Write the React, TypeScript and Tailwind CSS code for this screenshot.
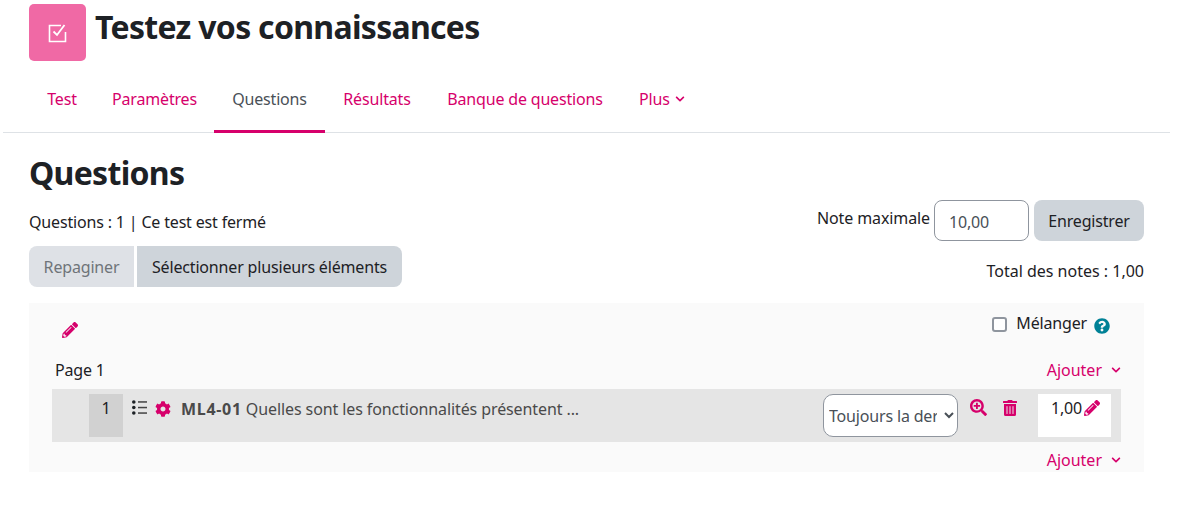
import React from 'react';
import { FaCog, FaPencilAlt, FaQuestionCircle, FaSearchPlus, FaTrashAlt, FaChevronDown } from 'react-icons/fa';

const tabs = [
  { label: 'Test', width: 'w-[66px]' },
  { label: 'Paramètres', width: 'w-[119px]' },
  { label: 'Questions', width: 'w-[111px]' },
  { label: 'Résultats', width: 'w-[104px]' },
  { label: 'Banque de questions', width: 'w-[192px]' },
];

const AddMenu: React.FC = () => (
  <a className="flex items-center gap-[9px] text-[#d6006b] tracking-normal">
    Ajouter
    <FaChevronDown className="w-[10px] h-[10px]" />
  </a>
);

const App: React.FC = () => {
  return (
    <div className="w-[1188px] h-[524px] bg-white overflow-hidden font-['Noto_Sans','Open_Sans',sans-serif] text-[16px] leading-[22px] text-[#1d2125] tracking-[-0.17px]">
      <header className="pl-[29px] pt-[4px] flex items-start">
        <div className="w-[57px] h-[57px] rounded-[5px] bg-[#f069a5] flex items-center justify-center">
          <svg width="22" height="22" viewBox="0 0 22 22" fill="none" stroke="white">
            <path d="M14 3.5H2.5V19.5H18.5V10" strokeWidth="1.6" />
            <path d="M6.5 9.5L10 13L17.5 3" strokeWidth="1.8" />
          </svg>
        </div>
        <h1 className="ml-[9px] -mt-[1px] text-[32px] leading-[48px] font-bold tracking-[-0.7px]">Testez vos connaissances</h1>
      </header>

      <nav className="mt-[15px] ml-[3px] w-[1167px] h-[57px] border-b border-[#dee2e6] flex pl-[26px]">
        {tabs.map((t) => (
          <a
            key={t.label}
            className={
              t.label === 'Questions'
                ? `${t.width} h-[57px] text-center pt-[12px] text-[#495057] border-b-[3px] border-[#d6006b]`
                : `${t.width} h-[56px] text-center pt-[12px] text-[#d6006b]`
            }
          >
            {t.label}
          </a>
        ))}
        <a className="h-[56px] px-[18px] pt-[12px] text-[#d6006b] flex items-start gap-[5px]">
          Plus
          <FaChevronDown className="w-[10px] h-[10px] mt-[6px]" />
        </a>
      </nav>

      <main className="ml-[29px] w-[1115px]">
        <h2 className="mt-[17px] text-[32px] leading-[45px] font-bold tracking-[-0.7px]">Questions</h2>

        <div className="flex justify-between items-start mt-[5px]">
          <div>
            <div className="mt-[9px] leading-[26px]">Questions : 1 | Ce test est fermé</div>
            <div className="flex mt-[11px] gap-[3px]">
              <button className="w-[105px] h-[41px] rounded-l-[8px] bg-[#dee1e6] text-[#6f7479]">Repaginer</button>
              <button className="h-[41px] px-[15px] rounded-r-[8px] bg-[#ced4da]">Sélectionner plusieurs éléments</button>
            </div>
          </div>
          <div className="flex flex-col items-end">
            <div className="flex items-start">
              <span className="mt-[7px] mr-[4px] tracking-[-0.1px]">Note maximale</span>
              <input
                defaultValue="10,00"
                className="w-[95px] h-[41px] rounded-[8px] border border-[#8f959e] pl-[14px] pt-[2px] text-[#495057]"
              />
              <button className="ml-[5px] w-[110px] h-[41px] pt-[1px] rounded-[8px] bg-[#ced4da]">Enregistrer</button>
            </div>
            <div className="mt-[19px] tracking-normal">Total des notes : 1,00</div>
          </div>
        </div>

        <section className="mt-[16px] h-[169px] bg-[#fafafa] px-[23px]">
          <div className="flex justify-between h-[56px]">
            <FaPencilAlt className="ml-[10px] mt-[19px] w-[16px] h-[16px] text-[#d6006b]" />
            <div className="flex items-start pt-[9px] pr-[11px]">
              <span className="mt-[5px] w-[15px] h-[15px] rounded-[3px] border-2 border-[#8f959e] bg-white" />
              <span className="ml-[9px]">Mélanger</span>
              <FaQuestionCircle className="ml-[7px] mt-[6px] w-[16px] h-[16px] text-[#008196]" />
            </div>
          </div>
          <div className="flex justify-between h-[30px] pl-[3px] items-start">
            <span>Page 1</span>
            <AddMenu />
          </div>
          <div className="h-[53px] bg-[#e5e5e5] flex items-start pl-[37px] pt-[5px]">
            <div className="w-[34px] h-[43px] bg-[#d1d1d1] text-center pt-[3px]">1</div>
            <svg className="ml-[9px] mt-[6px]" width="15" height="15" viewBox="0 0 15 15" fill="#1d2125">
              <circle cx="1.8" cy="2" r="1.8" />
              <circle cx="1.8" cy="7.5" r="1.8" />
              <circle cx="1.8" cy="13" r="1.8" />
              <rect x="6" y="1.2" width="9" height="1.5" fill="#444" />
              <rect x="6" y="6.8" width="9" height="1.5" fill="#444" />
              <rect x="6" y="12.3" width="9" height="1.5" fill="#444" />
            </svg>
            <FaCog className="ml-[8px] mt-[7px] w-[16px] h-[16px] text-[#d6006b]" />
            <div className="ml-[10px] mt-[4px] w-[642px] text-[#4a4a4a] whitespace-nowrap tracking-[-0.1px]">
              <b className="font-bold tracking-[0.7px]">ML4-01</b> Quelles sont les fonctionnalités présentent ...
            </div>
            <select
              defaultValue="last"
              className="w-[135px] h-[43px] rounded-[10px] border border-[#8f959e] bg-white pl-[1px] pr-[4px] text-[#495057]"
            >
              <option value="last">Toujours la dernière version</option>
            </select>
            <FaSearchPlus className="ml-[12px] mt-[5px] w-[17px] h-[17px] text-[#d6006b]" />
            <FaTrashAlt className="ml-[15px] mt-[6px] w-[16px] h-[16px] text-[#d6006b]" />
            <div className="ml-[20px] w-[73px] h-[43px] bg-white flex items-start pl-[13px] pt-[3px]">
              1,00
              <FaPencilAlt className="ml-[2px] mt-[3px] w-[16px] h-[16px] text-[#d6006b]" />
            </div>
          </div>
          <div className="flex justify-end h-[29px] items-end">
            <AddMenu />
          </div>
        </section>
      </main>
    </div>
  );
};

export default App;
